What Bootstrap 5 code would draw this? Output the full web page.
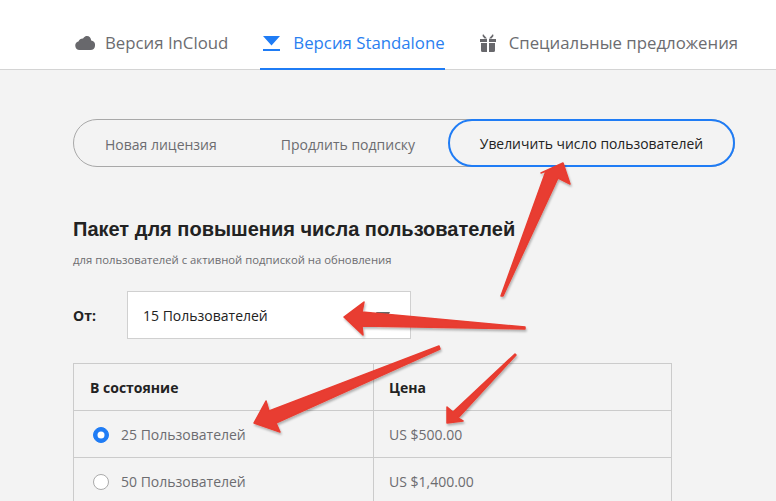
<!DOCTYPE html>
<html lang="ru">
<head>
<meta charset="utf-8">
<title>Версии</title>
<link href="https://cdn.jsdelivr.net/npm/bootstrap@5.3.0/dist/css/bootstrap.min.css" rel="stylesheet">
<style>
html,body{height:501px;overflow:hidden}
body{background:#f3f3f3;font-family:"Open Sans","Noto Sans",sans-serif;position:relative;color:#222}
.topbar{background:#fff;border-bottom:1px solid #d4d4d4;height:70px;padding-left:75px;gap:32px}
.topbar .nav-link{height:70px;color:#6c6c70;font-size:16.8px;padding:18px 0 0;display:flex;align-items:center;gap:10px;border-bottom:2px solid transparent}
.topbar .nav-link.active{color:#2a7ff0;border-bottom-color:#1f7cf5;padding-left:3px;gap:13px}
.topbar .lasttab{margin-left:3px}
.topbar .lasttab .nav-link{gap:13px}
.pagewrap{padding:49px 41px 0 73px}
.segwrap{height:48px;border:1px solid #a8a8a8;border-radius:24px;position:relative}
.segitem{font-size:14px;color:#6c6c70;text-decoration:none;line-height:49px}
.seg1{margin-left:31px}
.seg2{margin-left:64px}
.segactive{position:absolute;top:-1px;right:-1px;left:374px;height:48px;border:2px solid #1f7cf5;border-radius:24px;color:#222;text-align:center;line-height:45px;font-size:13.9px}
.maintitle{font-family:"Liberation Sans",sans-serif;font-weight:700;font-size:20px;margin:50px 0 0;line-height:24px;color:#222}
.subtitle{font-size:11.3px;color:#6c6c70;margin-top:11px;line-height:15px}
.fromrow{margin-top:24px;gap:31px}
.fromlabel{font-weight:700;font-size:14px;width:23px}
.fromselect{width:284px;height:48px;border:1px solid #d0d0d0;background-color:#fff;font-size:14px;color:#222;padding:0 15px;position:relative;display:flex;align-items:center}
.caretmark{position:absolute;left:248px;top:20px;width:14px;height:7px;background:#666;clip-path:polygon(0 0,100% 0,75% 100%,25% 100%)}
.pricetable{width:599px;margin:24px 0 0;--bs-table-bg:transparent;border-color:#cbcbcb;table-layout:fixed}
.pricetable th,.pricetable td{height:47px;padding:0 15px;vertical-align:middle;font-size:14px;border:1px solid #cbcbcb}
.pricetable th{color:#222;font-weight:700}
.pricetable td{color:#6c6c70}
.pricetable th.col1{width:300px;padding-left:16px}
.pricetable .form-check-input{width:16px;height:16px;margin:0 12px 0 4px;vertical-align:-3px;float:none;background-color:#fff;border-color:#aaa}
.pricetable .form-check-input:checked{background-color:#1f7cf5;border-color:#1f7cf5}
.arrows{position:absolute;left:0;top:0;width:776px;height:501px;pointer-events:none}
</style>
</head>
<body>
<ul class="nav topbar">
  <li class="nav-item"><a class="nav-link" href="#">
    <svg width="20" height="14" viewBox="0 0 20 14"><path fill="#68686c" d="M4.5 14A4.400 4.400 0 0 1 3.400 5.400 4.900 4.900 0 0 1 8 2.500a5.600 5.600 0 0 1 2.500-2.200C13.500-.7 16 1.300 16.200 4.500A4.800 4.800 0 0 1 15.500 14Z"/></svg>
    Версия InCloud</a></li>
  <li class="nav-item"><a class="nav-link active" href="#">
    <svg width="17" height="15" viewBox="0 0 17 15"><path fill="#1f7cf5" d="M0 0h17L8.500 9.500ZM0 13h17v2H0Z"/></svg>
    Версия Standalone</a></li>
  <li class="nav-item lasttab"><a class="nav-link" href="#">
    <svg width="16" height="18" viewBox="0 0 16 18"><path fill="#68686c" d="M0 5h7v3H0ZM9 5h7v3H9ZM1 9h6v9H2.500A1.500 1.500 0 0 1 1 16.500ZM9 9h6v7.500A1.500 1.500 0 0 1 13.500 18H9ZM3 0l4 4.500H4.500L2.500 2ZM13 0l-4 4.500h2.500l2-2.500Z"/></svg>
    Специальные предложения</a></li>
</ul>
<main class="pagewrap">
  <div class="segwrap d-flex">
    <a class="segitem seg1" href="#">Новая лицензия</a>
    <a class="segitem seg2" href="#">Продлить подписку</a>
    <a class="segitem segactive" href="#">Увеличить число пользователей</a>
  </div>
  <h1 class="maintitle">Пакет для повышения числа пользователей</h1>
  <div class="subtitle">для пользователей с активной подпиской на обновления</div>
  <div class="d-flex align-items-center fromrow">
    <span class="fromlabel">От:</span>
    <div class="fromselect">15 Пользователей<span class="caretmark"></span></div>
  </div>
  <table class="table pricetable">
    <thead><tr><th class="col1">В состояние</th><th>Цена</th></tr></thead>
    <tbody>
      <tr><td><input class="form-check-input" type="radio" name="pk" checked>25 Пользователей</td><td>US $500.00</td></tr>
      <tr><td><input class="form-check-input" type="radio" name="pk">50 Пользователей</td><td>US $1,400.00</td></tr>
    </tbody>
  </table>
</main>
<svg class="arrows" viewBox="0 0 776 501">
  <defs><filter id="sh" x="-10%" y="-10%" width="120%" height="120%"><feDropShadow dx="1" dy="2" stdDeviation="1" flood-color="#000" flood-opacity=".28"/></filter></defs>
  <g fill="#e83c30" stroke="#e83c30" stroke-width="1.500" stroke-linejoin="round" filter="url(#sh)">
    <path d="M563 163 570 184 558 178 503 296 501 296 546 171 541 173Z"/>
    <path d="M344 317 364 302 362 312 525 327 525 329 362 326 363 335Z"/>
    <path d="M254 423 266 401 269 411 439 346 440 349 276 423 280 432Z"/>
    <path d="M447 423 447 407 453 412 515 354 516 355 458 418 463 421Z"/>
  </g>
</svg>
</body>
</html>
